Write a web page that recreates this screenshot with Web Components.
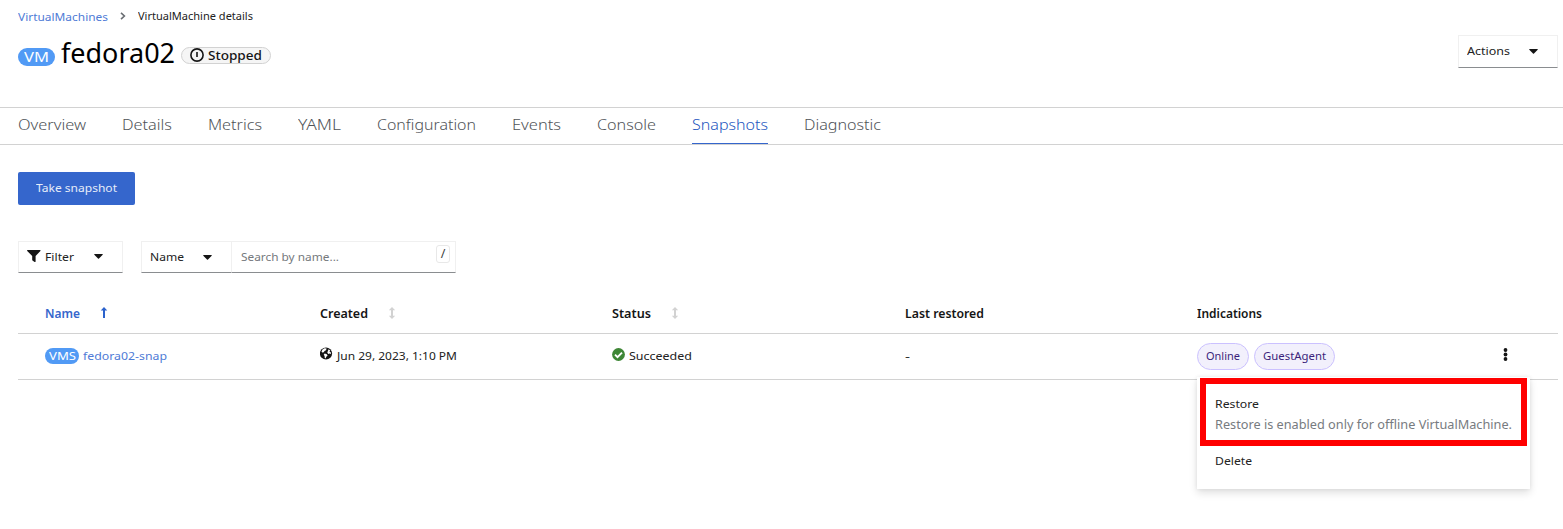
<!DOCTYPE html>
<html lang="en">
<head>
<meta charset="utf-8">
<title>VirtualMachine details</title>
<style>
html,body{margin:0;background:#fff}
body{font-family:"Noto Sans","Open Sans",sans-serif;font-size:11.5px;color:#222;overflow:hidden}
</style>
</head>
<body>
<vm-page></vm-page>
<script>
const define = (name, html, setup) => customElements.define(name, class extends HTMLElement {
  connectedCallback() {
    if (this.shadowRoot) return;
    const t = document.createElement('template');
    t.innerHTML = html;
    this.attachShadow({ mode: 'open' }).append(t.content.cloneNode(true));
    if (setup) setup(this, this.shadowRoot);
  }
});

/* A single-line label whose glyphs are stretched to a given width. */
define('fit-text', `<style>
:host{display:inline-block;white-space:nowrap;flex:none;line-height:20px;height:20px}
span{display:inline-block;transform-origin:0 0}
</style><span><slot></slot></span>`, (el, root) => {
  const w = +el.getAttribute('w');
  const span = root.querySelector('span');
  const natural = span.getBoundingClientRect().width;
  span.style.transform = `scaleX(${w / natural})`;
  el.style.width = w + 'px';
});

define('kind-badge', `<style>
:host{display:flex;box-sizing:border-box;align-items:center;justify-content:center;background:#519af5;color:#fff;border-radius:20px;flex:none}
</style><slot></slot>`);

define('caret-icon', `<style>:host{display:block;flex:none;width:9px;height:5px}svg{display:block}</style>
<svg width="9" height="5" viewBox="0 0 9 5"><path d="M.7 0h7.6c.5 0 .7.5.4.8L5 4.5a.7.7 0 0 1-1 0L.3.8C0 .5.2 0 .7 0z" fill="#151515"/></svg>`);

define('sort-icon', `<style>:host{display:block;flex:none;height:12px;width:8px}svg{display:block}</style><svg width="8" height="12" viewBox="0 0 8 12"></svg>`,
(el, root) => {
  root.querySelector('svg').innerHTML = el.hasAttribute('up')
    ? '<path d="M4 0 7.3 3.6H5V11H3V3.6H.7z" fill="#2b62cc"/>'
    : '<path d="M4 0 7.200 3.200H5v5.600h2.200L4 12 .8 8.800H3V3.200H.8z" fill="#d2d2d2"/>';
});

define('menu-toggle', `<style>
:host{display:flex;box-sizing:border-box;align-items:center;border:1px solid #f0f0f0;border-bottom-color:#8a8d90;background:#fff;flex:none;padding:0 8px}
</style><slot></slot>`);

define('page-header', `<style>
:host{display:block;height:107px}
nav{display:flex;height:32px;padding-left:18px;align-items:center}
nav fit-text:first-child{color:#4f7bd6;margin-top:2px}
nav svg{margin:0 12px 0 12px}
.row{display:flex;justify-content:space-between;padding:3px 5px 0 18px}
.title{display:flex;align-items:center;height:36px}
kind-badge{width:37px;height:18px;font-size:14.500px;margin-top:7px}
kind-badge fit-text{margin-top:-2px}
h1{margin:0 6px;font-weight:400;font-size:26.500px;color:#000;display:flex}
h1 fit-text{line-height:36px;height:36px}
.state{box-sizing:border-box;display:flex;align-items:center;width:90px;height:17px;border:1px solid #d2d2d2;border-radius:20px;background:#f5f5f5;padding-left:8px;font-size:12.500px;font-weight:500;margin-top:4px;color:#151515}
.state svg{margin-right:4px}
.state fit-text{margin-top:2px}
menu-toggle{width:100px;height:33px}
menu-toggle fit-text{margin-top:-2px}
menu-toggle caret-icon{margin-left:19px}
</style>
<nav><fit-text w="90">VirtualMachines</fit-text><svg width="6" height="8" viewBox="0 0 6 8"><path d="M1 .8 4.4 4 1 7.2" fill="none" stroke="#6a6e73" stroke-width="1.6"/></svg><fit-text w="115">VirtualMachine details</fit-text></nav>
<div class="row"><div class="title"><kind-badge><fit-text w="25">VM</fit-text></kind-badge><h1><fit-text w="114">fedora02</fit-text></h1>
<div class="state"><svg width="14" height="14" viewBox="0 0 14 14"><circle cx="7" cy="7" r="6.1" fill="none" stroke="#151515" stroke-width="1.6"/><path d="M7 4v5" stroke="#151515" stroke-width="1.6"/></svg><fit-text w="54">Stopped</fit-text></div></div>
<menu-toggle><fit-text w="43">Actions</fit-text><caret-icon></caret-icon></menu-toggle></div>`);

define('tab-item', `<style>
:host{display:block;height:36px;box-sizing:border-box;font-size:15px;font-weight:300;color:#4f5357}
:host([active]){color:#2456c0;border-bottom:1px solid #3566cc}
div{padding-top:6px}
</style><div><slot></slot></div>`);

define('tab-bar', `<style>
:host{display:flex;box-sizing:border-box;height:38px;border-top:1px solid #d2d2d2;border-bottom:1px solid #d2d2d2;padding-left:18px;gap:36px}
</style><slot></slot>`);

define('filter-bar', `<style>
:host{display:flex;padding:36px 0 0 18px;height:32px}
menu-toggle{height:32px}
.f{width:105px;margin-right:18px}
.f svg{margin:-2px 4px 0 0}
.f caret-icon{margin:-1px 0 0 20px}
.n{width:91px;border-right:0}
.n caret-icon{margin:1px 0 0 19px}
.search{box-sizing:border-box;width:225px;height:32px;border:1px solid #f0f0f0;border-bottom-color:#8a8d90;display:flex;align-items:center;justify-content:space-between;padding:0 5px 0 9px;margin-left:-1px;color:#75797d}
kbd{box-sizing:border-box;width:14px;height:18px;border:1px solid #e8e8e8;border-radius:3px;font:12.500px/15px "Noto Sans",sans-serif;text-align:center;color:#3c3f42;margin-bottom:6px}
</style>
<menu-toggle class="f"><svg width="14" height="12" viewBox="0 0 14 12"><path d="M.7 0h12.2c.6 0 .9.7.5 1.1L8.600 6v5.500c0 .5-.6.7-1 .4L5.500 10.400a.7.7 0 0 1-.3-.5V6L.2 1.100C-.2.7.1 0 .7 0z" fill="#151515"/></svg><fit-text w="29">Filter</fit-text><caret-icon></caret-icon></menu-toggle>
<menu-toggle class="n"><fit-text w="34">Name</fit-text><caret-icon></caret-icon></menu-toggle>
<div class="search"><fit-text w="98">Search by name...</fit-text><kbd>/</kbd></div>`);

define('take-button', `<style>
:host{display:flex;box-sizing:border-box;margin:27px 0 0 18px;padding-bottom:2px;width:117px;height:33px;border-radius:2px;background:#3566cc;color:#e6edf9;align-items:center;justify-content:center}
</style><slot></slot>`);

define('label-chip', `<style>
:host{display:flex;box-sizing:border-box;height:27px;border:1px solid #cbc1ff;border-radius:30px;background:#f2f0fc;color:#3b1f7a;align-items:center;padding:0 8px 2px;flex:none;font-size:11.500px}
</style><slot></slot>`);

define('action-menu', `<style>
:host{position:absolute;left:1197px;top:377px;width:333px;height:112px;background:#fff;box-shadow:0 4px 8px rgba(3,3,3,.12),0 0 4px rgba(3,3,3,.07)}
.mark{box-sizing:border-box;margin:1px 3px 0;height:68px;border:6px solid #f00;padding:10px 0 0 9px}
.mark fit-text{display:block}
.mark .desc{color:#777b80;font-size:12.500px;margin-top:1px}
.del{margin:5px 0 0 18px}
</style>
<div class="mark"><fit-text w="44">Restore</fit-text><fit-text class="desc" w="297">Restore is enabled only for offline VirtualMachine.</fit-text></div>
<fit-text class="del" w="37">Delete</fit-text>`);

define('snapshot-table', `<style>
:host{display:block;margin:20px 5px 0 18px}
.r{display:grid;grid-template-columns:275px 292px 293px 292px 1fr;padding-left:27px;border-bottom:1px solid #d2d2d2}
.r>div{display:flex;align-items:center}
.h{height:40px;font-weight:600;font-size:12px;color:#151515}
.h fit-text{margin-top:2px}
.b{height:45px}
.b fit-text{margin-top:-1px}
.b label-chip fit-text,.b kind-badge fit-text{margin-top:0}
.h .on{color:#3566cc}
sort-icon{margin-left:20px}
kind-badge{width:34px;height:16px;margin:-1px 4px 0 0}
.link{color:#4f7bd6}
.g{margin:-5px 4px 0 0}
.ind{gap:5px}
.k{margin:-5px 0 0 163px}
</style>
<div class="r h"><div class="on"><fit-text w="35">Name</fit-text><sort-icon up></sort-icon></div><div><fit-text w="48">Created</fit-text><sort-icon></sort-icon></div><div><fit-text w="39">Status</fit-text><sort-icon></sort-icon></div><div><fit-text w="79">Last restored</fit-text></div><div><fit-text w="65">Indications</fit-text></div></div>
<div class="r b"><div><kind-badge><fit-text w="27">VMS</fit-text></kind-badge><fit-text class="link" w="84">fedora02-snap</fit-text></div>
<div><svg class="g" style="margin-top:-6px" width="13" height="13" viewBox="0 0 13 13"><circle cx="6" cy="6.500" r="6.100" fill="#151515"/><path d="M4.600 1.300 6.600 1.600 6 3.200 4.500 4 3.800 5.200 2.200 5.400 1.500 4.500 2.500 2.600zM8.600 2.200 10.300 3.400 9.400 4.600 10.900 5.400 11 7 9.600 6.600 8.200 6.900 7.300 5.600 7.900 4zM4.700 6.500 6.800 7.300 7.600 8.400 6.300 9.700 5.600 11.400 4.700 10.700 4.600 9 3.700 7.800z" fill="#fff"/></svg><fit-text w="120">Jun 29, 2023, 1:10 PM</fit-text></div>
<div><svg class="g" width="13" height="13" viewBox="0 0 13 13"><circle cx="6.500" cy="6.500" r="6.400" fill="#3e8635"/><path d="m3 6.700 2.500 2.500L10 4.600" fill="none" stroke="#fff" stroke-width="1.900"/></svg><fit-text w="63">Succeeded</fit-text></div>
<div><fit-text w="5">-</fit-text></div>
<div class="ind"><label-chip><fit-text w="34">Online</fit-text></label-chip><label-chip><fit-text w="63">GuestAgent</fit-text></label-chip><svg class="k" width="5" height="13" viewBox="0 0 5 13" fill="#151515"><circle cx="2.500" cy="2" r="1.900"/><circle cx="2.500" cy="6.500" r="1.900"/><circle cx="2.500" cy="11" r="1.900"/></svg></div></div>`);

define('vm-page', `<style>:host{display:block;position:relative;width:1563px;height:529px;overflow:hidden}</style>
<page-header></page-header>
<tab-bar><tab-item><fit-text w="68">Overview</fit-text></tab-item><tab-item><fit-text w="50">Details</fit-text></tab-item><tab-item><fit-text w="54">Metrics</fit-text></tab-item><tab-item><fit-text w="43">YAML</fit-text></tab-item><tab-item><fit-text w="99">Configuration</fit-text></tab-item><tab-item><fit-text w="49">Events</fit-text></tab-item><tab-item><fit-text w="59">Console</fit-text></tab-item><tab-item active><fit-text w="76">Snapshots</fit-text></tab-item><tab-item><fit-text w="77">Diagnostic</fit-text></tab-item></tab-bar>
<take-button><fit-text w="81">Take snapshot</fit-text></take-button>
<filter-bar></filter-bar>
<snapshot-table></snapshot-table>
<action-menu></action-menu>`);
</script>
</body>
</html>
